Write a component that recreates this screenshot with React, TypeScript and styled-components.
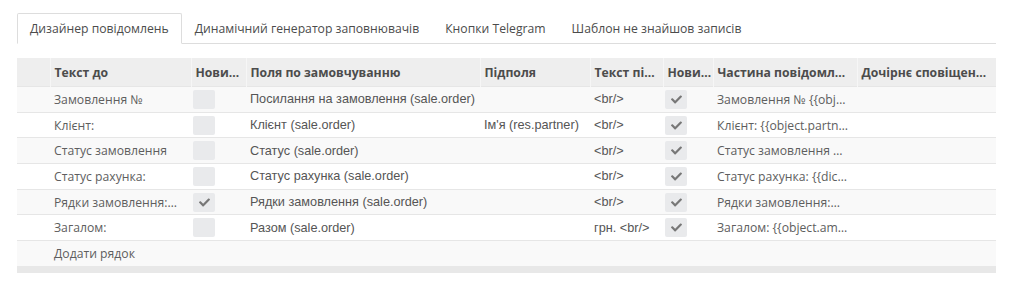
import styled, { createGlobalStyle } from 'styled-components';
import { FaCheck } from 'react-icons/fa';

const GlobalStyle = createGlobalStyle`
  html, body {
    margin: 0;
    padding: 0;
    background: #fff;
  }
  body {
    font-family: "Open Sans", "Liberation Sans", sans-serif;
    font-size: 12.2px;
    color: #4c4c4c;
  }
`;

interface Column {
  title: string;
  width: number;
}

const columns: Column[] = [
  { title: '', width: 33 },
  { title: 'Текст до', width: 141 },
  { title: 'Нови…', width: 55 },
  { title: 'Поля по замовчуванню', width: 234 },
  { title: 'Підполя', width: 110 },
  { title: 'Текст пі…', width: 73 },
  { title: 'Нови…', width: 50 },
  { title: 'Частина повідомл…', width: 144 },
  { title: 'Дочірнє сповіщен…', width: 139 },
];

interface Line {
  before: string;
  newBefore: boolean;
  field: string;
  sub: string;
  after: string;
  newAfter: boolean;
  part: string;
}

const lines: Line[] = [
  { before: 'Замовлення №', newBefore: false, field: 'Посилання на замовлення (sale.order)', sub: '', after: '<br/>', newAfter: true, part: 'Замовлення № {{obj…' },
  { before: 'Клієнт:', newBefore: false, field: 'Клієнт (sale.order)', sub: "Ім'я (res.partner)", after: '<br/>', newAfter: true, part: 'Клієнт: {{object.partn…' },
  { before: 'Статус замовлення', newBefore: false, field: 'Статус (sale.order)', sub: '', after: '<br/>', newAfter: true, part: 'Статус замовлення …' },
  { before: 'Статус рахунка:', newBefore: false, field: 'Статус рахунка (sale.order)', sub: '', after: '<br/>', newAfter: true, part: 'Статус рахунка: {{dic…' },
  { before: 'Рядки замовлення:…', newBefore: true, field: 'Рядки замовлення (sale.order)', sub: '', after: '<br/>', newAfter: true, part: 'Рядки замовлення:…' },
  { before: 'Загалом:', newBefore: false, field: 'Разом (sale.order)', sub: '', after: 'грн. <br/>', newAfter: true, part: 'Загалом: {{object.am…' },
];

const tabs = ['Дизайнер повідомлень', 'Динамічний генератор заповнювачів', 'Кнопки Telegram', 'Шаблон не знайшов записів'];

const Check = ({ on }: { on: boolean }) => (
  <CheckBox>{on && <FaCheck />}</CheckBox>
);

const App = () => {
  return (
    <Page>
      <GlobalStyle />
      <TabBar>
        {tabs.map((t, i) => (
          <Tab key={t} $active={i === 0}>{t}</Tab>
        ))}
      </TabBar>
      <Table>
        <colgroup>
          {columns.map((c, i) => (
            <col key={i} style={{ width: c.width }} />
          ))}
        </colgroup>
        <thead>
          <tr>
            {columns.map((c, i) => (
              <HeadCell key={i}>{c.title}</HeadCell>
            ))}
          </tr>
        </thead>
        <tbody>
          {lines.map((l, i) => (
            <Row key={i} $odd={i % 2 === 0}>
              <Cell />
              <Cell>{l.before}</Cell>
              <BoxCell><Check on={l.newBefore} /></BoxCell>
              <FieldCell>{l.field}</FieldCell>
              <FieldCell>{l.sub}</FieldCell>
              <FieldCell>{l.after}</FieldCell>
              <BoxCell><Check on={l.newAfter} /></BoxCell>
              <Cell>{l.part}</Cell>
              <Cell />
            </Row>
          ))}
          <Row $odd>
            <Cell />
            <Cell colSpan={8}>Додати рядок</Cell>
          </Row>
        </tbody>
        <tfoot>
          <tr>
            <FootCell colSpan={9} />
          </tr>
        </tfoot>
      </Table>
    </Page>
  );
};

export default App;

const Page = styled.div`
  width: 1024px;
  height: 289px;
  padding: 13px 28px 0 17px;
  box-sizing: border-box;
`;

const TabBar = styled.div`
  display: flex;
  width: 979px;
  height: 31px;
  border-bottom: 1px solid #dddddd;
  box-sizing: border-box;
`;

const Tab = styled.div<{ $active?: boolean }>`
  padding: 0 12px;
  height: 31px;
  line-height: 29px;
  font-size: 12.2px;
  color: #4c4c4c;
  white-space: nowrap;
  box-sizing: border-box;
  border: 1px solid ${({ $active }) => ($active ? '#dddddd' : 'transparent')};
  border-bottom-color: ${({ $active }) => ($active ? '#ffffff' : 'transparent')};
  background: ${({ $active }) => ($active ? '#ffffff' : 'transparent')};
  border-radius: 2px 2px 0 0;
`;

const Table = styled.table`
  margin-top: 14px;
  width: 979px;
  table-layout: fixed;
  border-collapse: collapse;
`;

const HeadCell = styled.th`
  height: 28px;
  padding: 0 4px;
  text-align: left;
  font-weight: 700;
  font-size: 12.2px;
  color: #4c4c4c;
  background: #eeeeee;
  border-left: 1px solid #f6f6f6;
  white-space: nowrap;
  overflow: hidden;
  &:first-child {
    border-left: none;
  }
`;

const Row = styled.tr<{ $odd?: boolean }>`
  height: 25.7px;
  background: ${({ $odd }) => ($odd ? '#f9f9f9' : '#ffffff')};
  border-top: 1px solid #e6e6e6;
`;

const Cell = styled.td`
  padding: 0 4px;
  font-size: 12.2px;
  color: #5e5e5e;
  white-space: nowrap;
  overflow: hidden;
`;

const FieldCell = styled(Cell)`
  font-family: "Liberation Sans", Arial, sans-serif;
  font-size: 12.7px;
  color: #555555;
`;

const BoxCell = styled.td`
  padding: 0 2px;
  vertical-align: middle;
`;

const CheckBox = styled.div`
  width: 22px;
  height: 19px;
  border-radius: 2px;
  background: #e9eaec;
  display: flex;
  align-items: center;
  justify-content: center;
  svg {
    width: 11px;
    height: 11px;
    color: #777777;
  }
`;

const FootCell = styled.td`
  height: 7px;
  padding: 0;
  background: #e8e8e8;
`;
